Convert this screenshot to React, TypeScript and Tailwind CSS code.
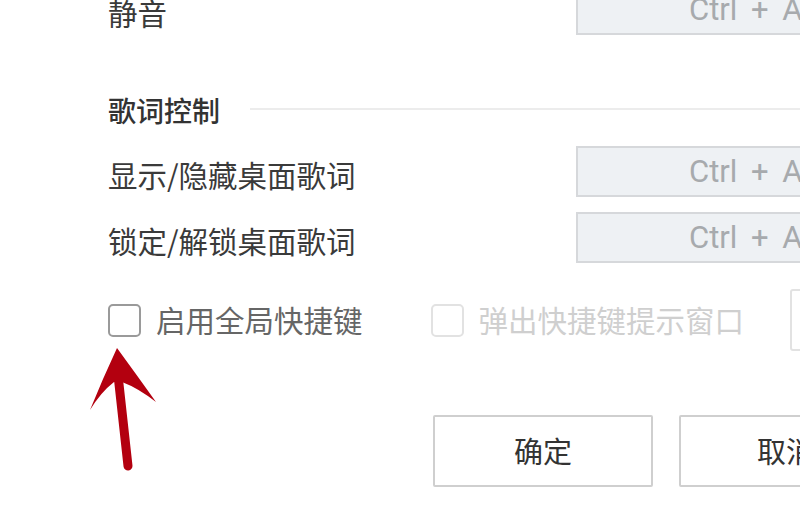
import React from 'react';

const cjk = { fontFamily: '"Noto Sans CJK SC", "Noto Sans", sans-serif' };
const latin = { fontFamily: 'Roboto, "Noto Sans", sans-serif' };

function HotkeyRow({ label, first }: { label: string; first?: boolean }) {
  return (
    <div className={`flex items-center h-[51px] ${first ? 'mt-[-16px]' : ''}`}>
      <div
        className="w-[468px] shrink-0 whitespace-nowrap text-[29.5px] leading-none text-[#3a3a3a] pt-[6px]"
        style={cjk}
      >
        {label}
      </div>
      <div className="w-[300px] h-[51px] shrink-0 border-2 border-[#d6d8db] bg-[#eef1f4] flex items-center pl-[111px]">
        <span className="text-[31px] text-[#a7aaad] whitespace-nowrap leading-none [word-spacing:6px]" style={latin}>
          Ctrl + A
        </span>
      </div>
    </div>
  );
}

function Checkbox({ label, disabled }: { label: string; disabled?: boolean }) {
  return (
    <label className="flex items-center gap-[15px] shrink-0">
      <span
        className={`w-[33px] h-[33px] shrink-0 rounded-[5px] border-2 ${disabled ? 'border-[#e2e2e2]' : 'border-[#9a9a9a]'}`}
      />
      <span
        className={`text-[29.5px] leading-none whitespace-nowrap ${disabled ? 'text-[#cfcfcf]' : 'text-[#666]'}`}
        style={cjk}
      >
        {label}
      </span>
    </label>
  );
}

export default function App() {
  return (
    <div className="relative w-[800px] h-[524px] overflow-hidden bg-white pl-[108px]">
      <HotkeyRow label="静音" first />

      {/* section header */}
      <div className="flex items-center h-[30px] mt-[60px]">
        <span className="text-[28px] leading-none text-[#333] font-medium shrink-0" style={cjk}>
          歌词控制
        </span>
        <div className="flex-1 h-[2px] bg-[#ececec] ml-[30px] mt-[-2px]" />
      </div>

      <div className="mt-[21px]">
        <HotkeyRow label="显示/隐藏桌面歌词" />
      </div>
      <div className="mt-[15px]">
        <HotkeyRow label="锁定/解锁桌面歌词" />
      </div>

      <div className="flex items-center h-[62px] mt-[26px]">
        <Checkbox label="启用全局快捷键" />
        <div className="ml-[68px] shrink-0">
          <Checkbox label="弹出快捷键提示窗口" disabled />
        </div>
        <div className="ml-[46px] w-[100px] h-[62px] shrink-0 border-2 border-[#e2e2e2] rounded-[3px]" />
      </div>

      <div className="flex gap-[26px] mt-[64px] ml-[325px]">
        <button
          className="w-[220px] h-[72px] shrink-0 border-2 border-[#cfcfcf] rounded-[2px] bg-white text-[29px] text-[#333]"
          style={cjk}
        >
          确定
        </button>
        <button
          className="w-[220px] h-[72px] shrink-0 border-2 border-[#cfcfcf] rounded-[2px] bg-white text-[29px] text-[#333] text-left pl-[76px] whitespace-nowrap"
          style={cjk}
        >
          取消
        </button>
      </div>

      {/* red annotation arrow */}
      <svg className="absolute left-0 top-0 pointer-events-none" width="800" height="524" viewBox="0 0 800 524">
        <line x1="128" y1="466" x2="118" y2="375" stroke="#b3000f" strokeWidth="9" strokeLinecap="round" />
        <path
          d="M117 348 Q136 374 156 402 Q138 388 122 382 L114 382 Q101 392 90 410 Q103 378 117 348 Z"
          fill="#b3000f"
        />
      </svg>
    </div>
  );
}
